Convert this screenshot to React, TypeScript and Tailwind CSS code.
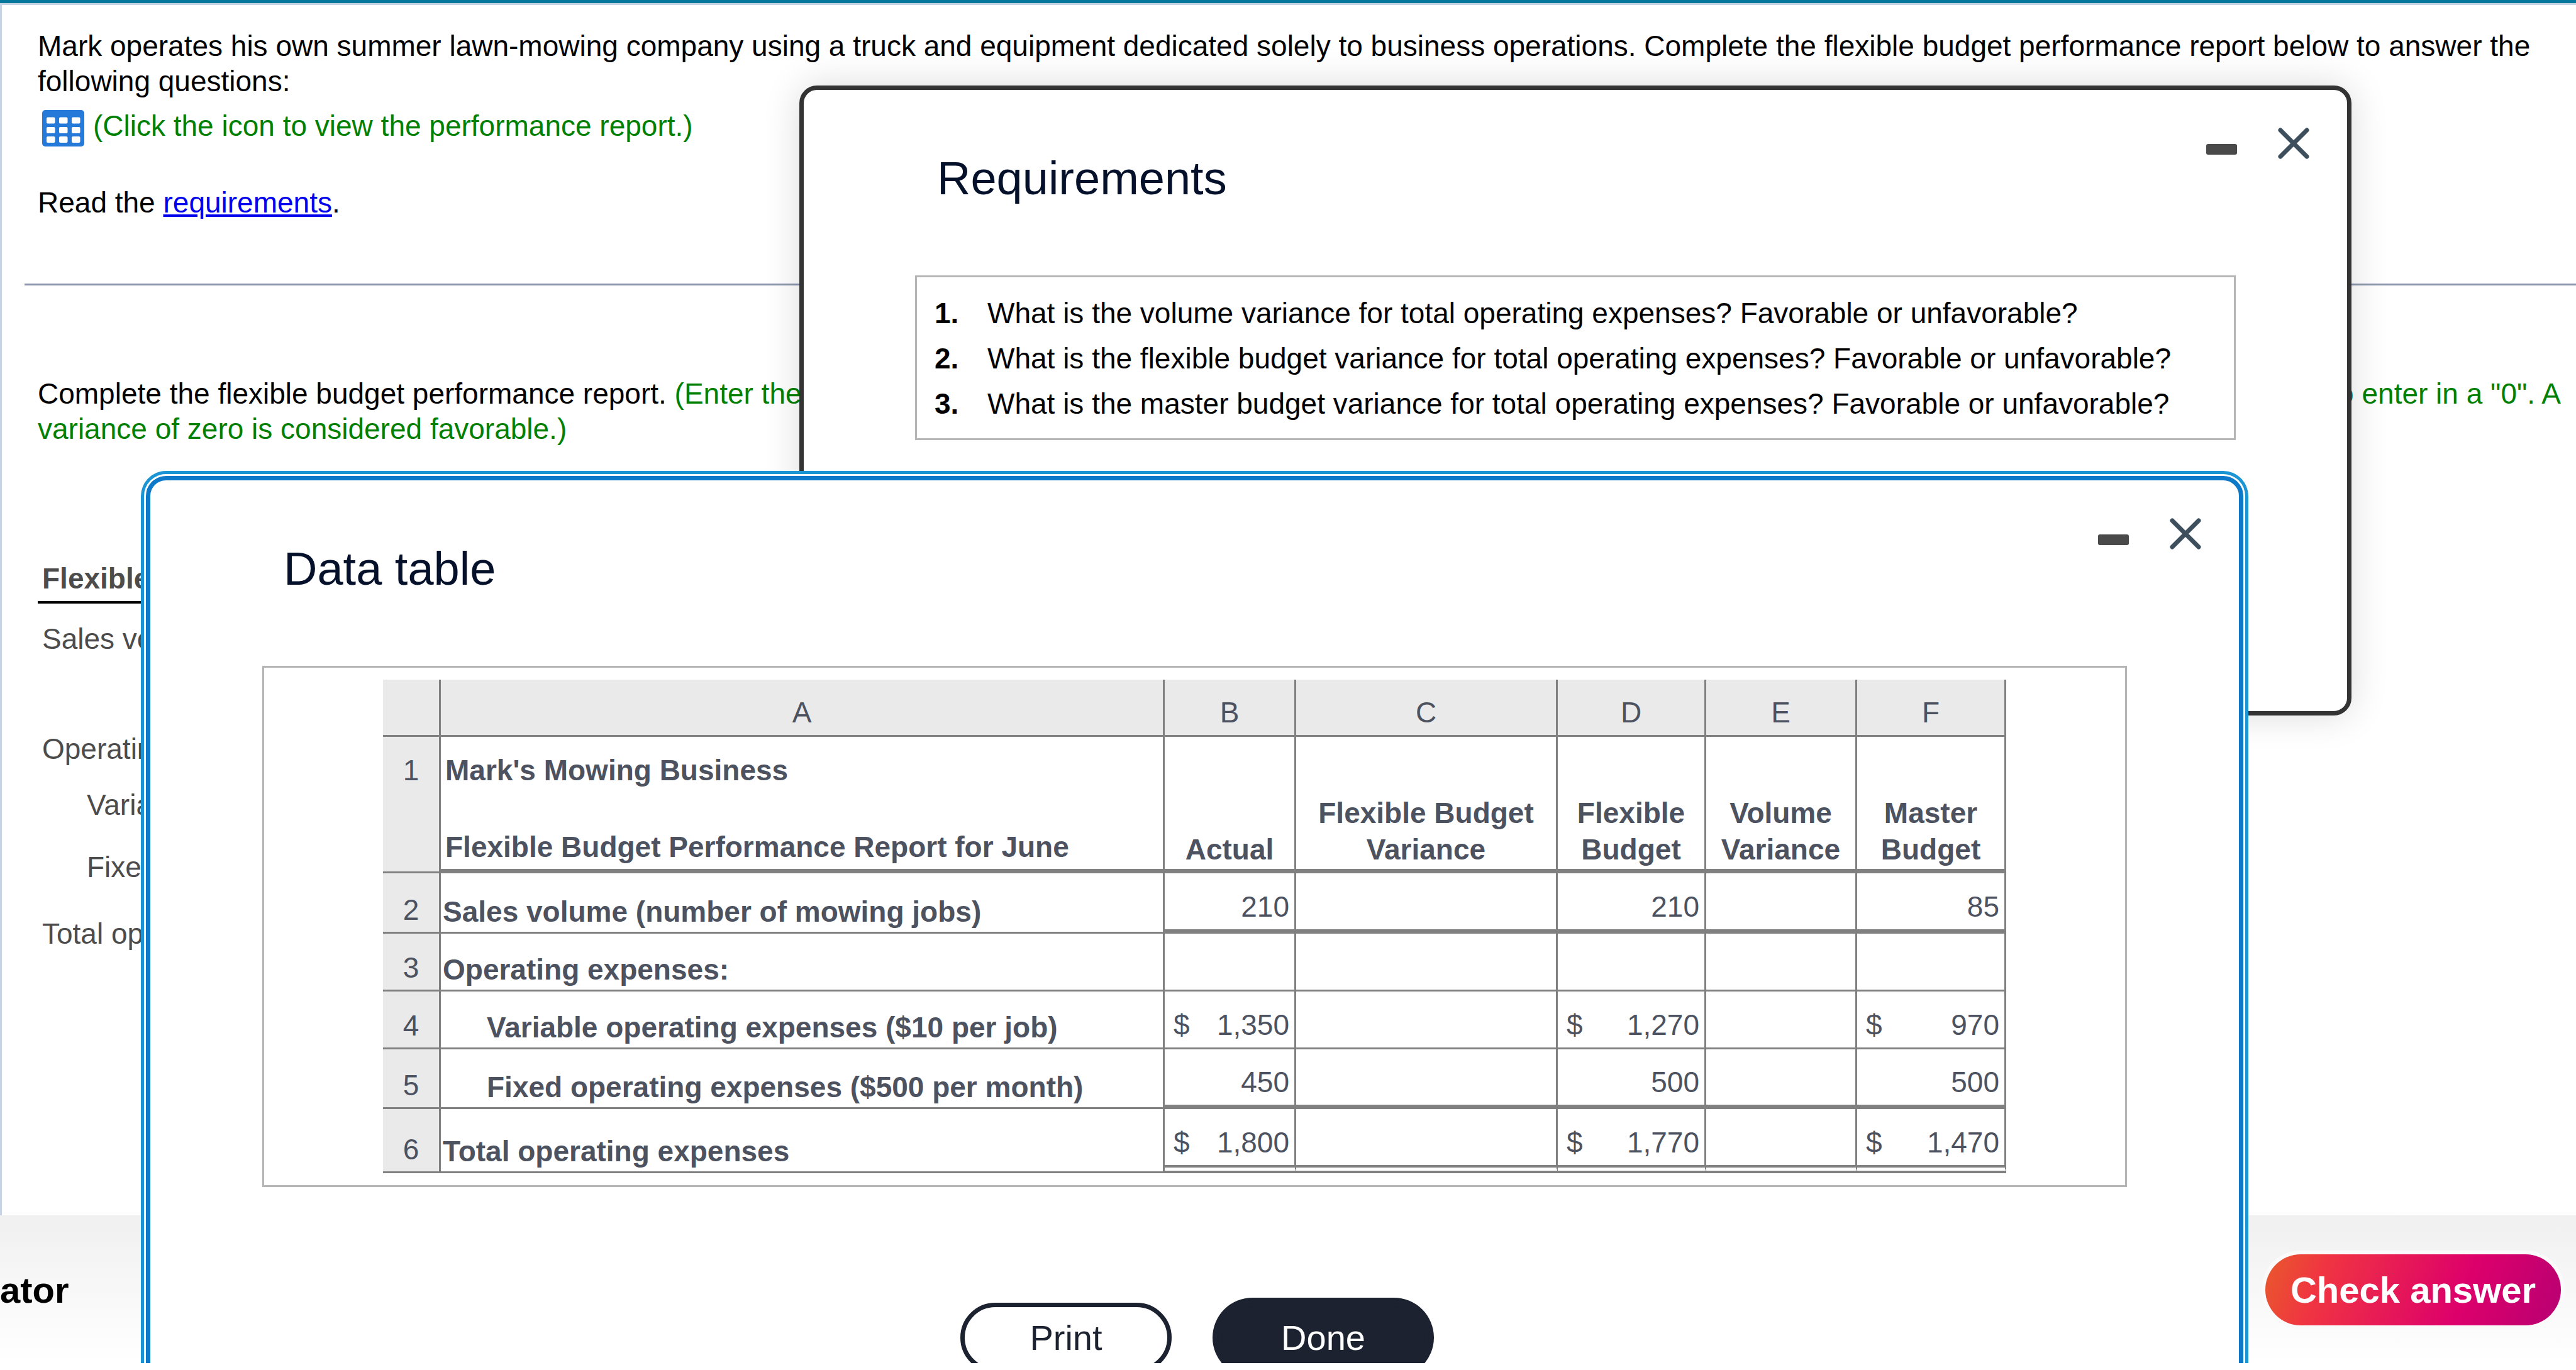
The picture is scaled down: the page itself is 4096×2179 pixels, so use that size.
import { useState } from 'react';
import type { ReactNode } from 'react';

interface DialogProps {
  id: string;
  title: string;
  className: string;
  onClose: () => void;
  children: ReactNode;
}

interface ReportRow {
  label: string;
  indent?: boolean;
  line?: 'thick' | 'double';
  dollar?: boolean;
  values: [string, string, string];
}

const questions = [
  'What is the volume variance for total operating expenses? Favorable or unfavorable?',
  'What is the flexible budget variance for total operating expenses? Favorable or unfavorable?',
  'What is the master budget variance for total operating expenses? Favorable or unfavorable?',
];

const columns = ['A', 'B', 'C', 'D', 'E', 'F'];

const headings = ['Actual', 'Flexible Budget Variance', 'Flexible Budget', 'Volume Variance', 'Master Budget'];

const rows: ReportRow[] = [
  { label: 'Sales volume (number of mowing jobs)', line: 'thick', values: ['210', '210', '85'] },
  { label: 'Operating expenses:', values: ['', '', ''] },
  {
    label: 'Variable operating expenses ($10 per job)',
    indent: true,
    dollar: true,
    values: ['1,350', '1,270', '970'],
  },
  {
    label: 'Fixed operating expenses ($500 per month)',
    indent: true,
    line: 'thick',
    values: ['450', '500', '500'],
  },
  { label: 'Total operating expenses', dollar: true, line: 'double', values: ['1,800', '1,770', '1,470'] },
];

const rowHeights = ['h-[96px]', 'h-[92px]', 'h-[92px]', 'h-[95px]', 'h-[102px]'];

const lineStyles = {
  thin: 'border-b-[3px]',
  thick: 'border-b-[7px]',
  double: 'border-b-[13px] [border-bottom-style:double]',
};

function TableIcon() {
  return (
    <svg className="h-[58px] w-[67px]" viewBox="0 0 67 58" aria-hidden="true">
      <rect width="67" height="58" rx="5" fill="#2579d8" />
      <g fill="#fff">
        {[11.5, 27, 42].map((y) =>
          [7, 27, 47].map((x) => <rect key={`${x}-${y}`} x={x} y={y} width="13.5" height="10" rx="2" />)
        )}
      </g>
    </svg>
  );
}

function Dialog({ id, title, className, onClose, children }: DialogProps) {
  return (
    <section role="dialog" aria-labelledby={id} className={`absolute bg-white ${className}`}>
      <header className="flex items-start justify-between pl-[212px] pr-[60px] pt-[60px]">
        <h2 id={id} className="mt-[39px] text-[74px] leading-[84px] text-[#05112a]">
          {title}
        </h2>
        <div className="flex gap-16">
          <button type="button" aria-label="Minimize">
            <svg className="h-[50px] w-[50px]" viewBox="0 0 50 50">
              <rect y="26" width="49" height="17" rx="3" fill="#4a4a4a" />
            </svg>
          </button>
          <button type="button" aria-label="Close" onClick={onClose}>
            <svg className="h-[50px] w-[50px]" viewBox="0 0 50 50">
              <path d="M4 4 46 46M46 4 4 46" stroke="#3d4e5d" strokeWidth="7" strokeLinecap="round" />
            </svg>
          </button>
        </div>
      </header>
      {children}
    </section>
  );
}

function ReportTable() {
  return (
    <table className="mx-auto w-[2581px] table-fixed border-separate border-spacing-0 text-[#4c5260]">
      <colgroup>
        <col className="w-[92px]" />
        <col className="w-[1151px]" />
        <col className="w-[209px]" />
        <col className="w-[416px]" />
        <col className="w-[236px]" />
        <col className="w-[240px]" />
        <col className="w-[237px]" />
      </colgroup>
      <thead>
        <tr className="h-[91px] bg-[#eaeaea] align-bottom">
          <td className="border-b-[3px] border-r-[3px] border-[#808080]" />
          {columns.map((column) => (
            <th key={column} className="border-b-[3px] border-r-[3px] border-[#808080] pb-2 font-normal">
              {column}
            </th>
          ))}
        </tr>
      </thead>
      <tbody>
        <tr className="h-[217px] align-bottom">
          <th className="border-b-[3px] border-r-[3px] border-[#808080] bg-[#eaeaea] pt-[25px] align-top font-normal">
            1
          </th>
          <th className="border-b-[7px] border-r-[3px] border-[#808080] pb-[7px] pl-[7px] text-left font-bold">
            <p className="mb-[66px]">Mark&apos;s Mowing Business</p>
            <p>Flexible Budget Performance Report for June</p>
          </th>
          {headings.map((heading) => (
            <th
              key={heading}
              className="border-b-[7px] border-r-[3px] border-[#808080] px-3 pb-[2px] leading-[58px] font-bold"
            >
              {heading}
            </th>
          ))}
        </tr>
        {rows.map((row, index) => {
          const cell = `border-r-[3px] border-[#808080] ${lineStyles[row.line ?? 'thin']}`;
          const [actual, flexible, master] = row.values;

          return (
            <tr key={row.label} className={`align-bottom ${rowHeights[index]}`}>
              <th className="border-b-[3px] border-r-[3px] border-[#808080] bg-[#eaeaea] pb-[7px] font-normal">
                {index + 2}
              </th>
              <th
                className={`border-b-[3px] border-r-[3px] border-[#808080] pb-1 text-left font-bold ${
                  row.indent ? 'pl-[73px]' : 'pl-[3px]'
                }`}
              >
                {row.label}
              </th>
              {[actual, '', flexible, '', master].map((value, i) => (
                <td key={i} className={cell}>
                  {value && (
                    <div className="flex justify-between pb-2 pl-[14px] pr-2">
                      <span>{row.dollar && '$'}</span>
                      <span>{value}</span>
                    </div>
                  )}
                </td>
              ))}
            </tr>
          );
        })}
      </tbody>
    </table>
  );
}

export default function App() {
  const [showRequirements, setShowRequirements] = useState(true);
  const [showData, setShowData] = useState(true);

  return (
    <div className="h-screen bg-white pb-[11px] font-['Liberation_Sans',Arial,sans-serif] text-[46px] leading-[56px] text-black">
      <div className="relative flex h-full flex-col overflow-hidden">
        <div className="h-2 shrink-0 border-b-[3px] border-[#c5d3e4] bg-[#04799a]" />

        <main className="min-h-0 flex-1 overflow-hidden border-l-[3px] border-[#c8d3e4] pt-[37px]">
          <div className="pl-[57px] pr-6">
            <p>
              Mark operates his own summer lawn-mowing company using a truck and equipment dedicated solely to business
              operations. Complete the flexible budget performance report below to answer the following questions:
            </p>
            <button
              type="button"
              onClick={() => setShowData(true)}
              className="mt-[15px] flex items-start gap-[14px] pl-[7px] text-[#008000]"
            >
              <span className="pt-[3px]">
                <TableIcon />
              </span>
              <span>(Click the icon to view the performance report.)</span>
            </button>
            <p className="mt-[61px]">
              Read the{' '}
              <a href="#requirements" onClick={() => setShowRequirements(true)} className="text-[#0000ee] underline">
                requirements
              </a>
              .
            </p>
          </div>

          <hr className="ml-9 mt-[101px] border-t-[3px] border-[#8a92ad]" />

          <div className="mt-[144px] pl-[57px] pr-6">
            <div className="flex justify-between text-[#008000]">
              <span>
                <span className="text-black">Complete the flexible budget performance report.</span> (Enter the
              </span>
              <span>to enter in a &quot;0&quot;. A</span>
            </div>
            <p className="text-[#008000]">variance of zero is considered favorable.)</p>
          </div>

          {/* Answer sheet labels */}
          <div className="ml-[57px] mt-[182px] w-[900px] text-[#4c4c4c]">
            <h3 className="border-b-[4px] border-black pb-2 pl-[7px] font-bold">Flexible</h3>
            <ul className="pl-[7px]">
              <li className="mt-7">Sales volume</li>
              <li className="mt-[119px]">Operating</li>
              <li className="mt-[33px] pl-[71px]">Variable</li>
              <li className="mt-[43px] pl-[71px]">Fixed</li>
              <li className="mt-[50px]">Total operating</li>
            </ul>
          </div>
        </main>

        <footer className="flex h-[235px] shrink-0 items-start justify-between bg-linear-to-b from-[#f0f0f0] to-white pr-6 pt-[62px] text-[58px] leading-[113px] font-bold">
          <div>ator</div>
          <button
            type="button"
            className="w-[470px] rounded-full bg-[linear-gradient(110deg,#ea5230_4%,#f03442_20%,#dd006b_66%,#b80072_100%)] text-white ring-6 ring-[#fafafa]"
          >
            Check answer
          </button>
        </footer>

        {showRequirements && (
          <Dialog
            id="requirements-title"
            title="Requirements"
            onClose={() => setShowRequirements(false)}
            className="left-[1271px] right-[357px] top-[136px] rounded-[28px] border-[7px] border-[#333] pb-[431px] shadow-[0_0_60px_rgba(0,0,0,0.14)]"
          >
            <ol className="mx-[177px] mt-[112px] border-[3px] border-[#b5b5b5] pb-[19px] pl-7 pt-[21px] leading-[72px]">
              {questions.map((question, index) => (
                <li key={question} className="flex">
                  <span className="w-[84px] font-bold">{index + 1}.</span>
                  {question}
                </li>
              ))}
            </ol>
          </Dialog>
        )}

        {showData && (
          <Dialog
            id="data-title"
            title="Data table"
            onClose={() => setShowData(false)}
            className="left-[232px] right-[529px] top-[757px] rounded-[32px] border-[7px] border-[#0e79c8] pb-20 shadow-[0_0_0_3px_#fff,0_0_0_8px_#1b95d3]"
          >
            <div className="mx-[178px] mt-[112px] border-[3px] border-[#b5b5b5] py-[19px]">
              <ReportTable />
            </div>
            <div className="mt-[184px] flex justify-center gap-[73px] text-[56px] leading-[97px]">
              <button
                type="button"
                className="w-[336px] rounded-full border-[7px] border-[#1c222f] bg-white text-[#1c222f]"
              >
                Print
              </button>
              <button
                type="button"
                onClick={() => setShowData(false)}
                className="w-[336px] rounded-full border-[7px] border-[#1c222f] bg-[#1c222f] text-white ring-8 ring-[#1c222f]"
              >
                Done
              </button>
            </div>
          </Dialog>
        )}
      </div>
    </div>
  );
}
